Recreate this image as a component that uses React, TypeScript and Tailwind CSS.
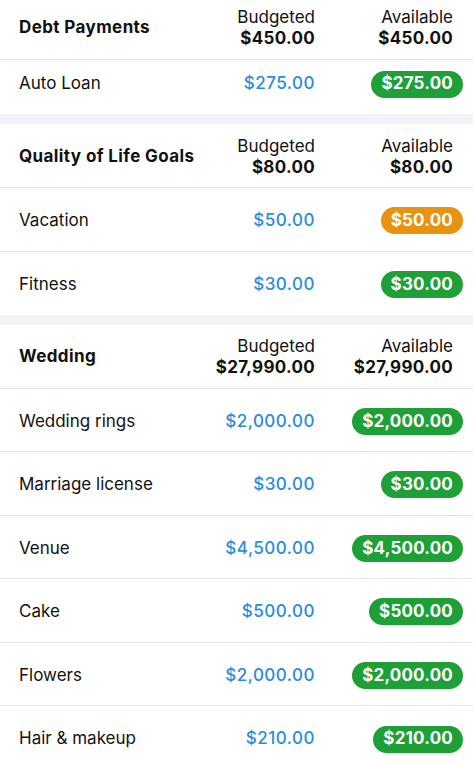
import React from 'react';

type Line = { name: string; budgeted: string; available: string; tone: 'green' | 'orange' };
type Group = { title: string; budgeted: string; available: string; lines: Line[] };

const groups: Group[] = [
  {
    title: 'Debt Payments',
    budgeted: '$450.00',
    available: '$450.00',
    lines: [{ name: 'Auto Loan', budgeted: '$275.00', available: '$275.00', tone: 'green' }],
  },
  {
    title: 'Quality of Life Goals',
    budgeted: '$80.00',
    available: '$80.00',
    lines: [
      { name: 'Vacation', budgeted: '$50.00', available: '$50.00', tone: 'orange' },
      { name: 'Fitness', budgeted: '$30.00', available: '$30.00', tone: 'green' },
    ],
  },
  {
    title: 'Wedding',
    budgeted: '$27,990.00',
    available: '$27,990.00',
    lines: [
      { name: 'Wedding rings', budgeted: '$2,000.00', available: '$2,000.00', tone: 'green' },
      { name: 'Marriage license', budgeted: '$30.00', available: '$30.00', tone: 'green' },
      { name: 'Venue', budgeted: '$4,500.00', available: '$4,500.00', tone: 'green' },
      { name: 'Cake', budgeted: '$500.00', available: '$500.00', tone: 'green' },
      { name: 'Flowers', budgeted: '$2,000.00', available: '$2,000.00', tone: 'green' },
      { name: 'Hair & makeup', budgeted: '$210.00', available: '$210.00', tone: 'green' },
    ],
  },
];

function GroupHeader({ group, first }: { group: Group; first: boolean }) {
  return (
    <div
      className={
        'flex items-center pl-[19px] pr-[20px] bg-white border-b border-[#e4e4e8] ' +
        (first ? 'h-[60px] pb-[3px]' : 'h-[64px] pt-[2px]')
      }
    >
      <div className="flex-1 font-bold tracking-[0.4px]">{group.title}</div>
      <div className="text-right leading-[21px]">
        <div>Budgeted</div>
        <div className="font-bold tracking-[0.3px]">{group.budgeted}</div>
      </div>
      <div className="w-[138px] text-right leading-[21px]">
        <div>Available</div>
        <div className="font-bold tracking-[0.3px]">{group.available}</div>
      </div>
    </div>
  );
}

function LineRow({ line, last, short }: { line: Line; last: boolean; short: boolean }) {
  const pill = line.tone === 'orange' ? 'bg-[#e9920f]' : 'bg-[#1fa036]';
  return (
    <div
      className={
        'flex items-center pl-[19px] pr-[10px] bg-white ' +
        (short ? 'h-[54px] pb-[6px] ' : last ? 'h-[63px] pt-[3px] ' : 'h-[63.5px] pt-[3px] border-b border-[#e4e4e8] ')
      }
    >
      <div className="flex-1">{line.name}</div>
      <div className="text-right text-[#2b8ddb] font-medium tracking-[0.5px]">{line.budgeted}</div>
      <div className="w-[148px] flex justify-end">
        <span className={'h-[27px] flex items-center px-[10px] rounded-full text-white font-bold tracking-[0.2px] ' + pill}>
          {line.available}
        </span>
      </div>
    </div>
  );
}

export default function App() {
  return (
    <div
      className="w-[473px] h-[763px] overflow-hidden bg-[#f2f2f7] text-[17px] text-[#111]"
      style={{ fontFamily: 'Inter, "Liberation Sans", sans-serif' }}
    >
      {groups.map((g, gi) => (
        <div key={g.title} className={gi === 0 ? '' : 'mt-[10px]'}>
          <GroupHeader group={g} first={gi === 0} />
          {g.lines.map((l, li) => (
            <LineRow
              key={l.name}
              line={l}
              last={li === g.lines.length - 1}
              short={gi === 0}
            />
          ))}
        </div>
      ))}
    </div>
  );
}
